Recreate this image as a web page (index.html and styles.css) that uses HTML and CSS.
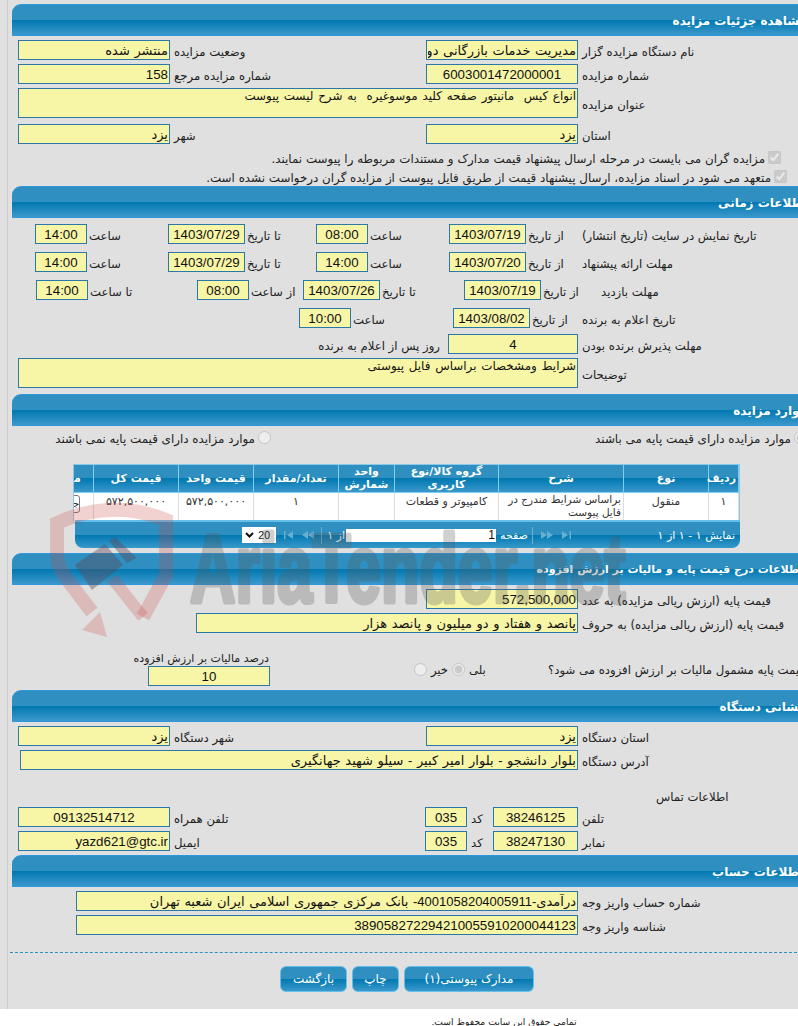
FILE: index.html
```html
<!DOCTYPE html>
<html lang="fa">
<head>
<meta charset="utf-8">
<title>مشاهده جزئیات مزایده</title>
<link rel="stylesheet" href="styles.css">
</head>
<body>
<div class="page">
<div class="inner">

<h2 class="head near">مشاهده جزئیات مزایده</h2>
<div class="body s1">
  <div class="row two">
    <input class="fld fa" readonly value="منتشر شده"><label class="lb">وضعیت مزایده</label>
    <input class="fld fa" readonly value="مدیریت خدمات بازرگانی دولتی یزد"><label class="lb">نام دستگاه مزایده گزار</label>
  </div>
  <div class="row two">
    <input class="fld num end" readonly value="158"><label class="lb">شماره مزایده مرجع</label>
    <input class="fld num mid" readonly value="6003001472000001"><label class="lb">شماره مزایده</label>
  </div>
  <div class="row wide tall">
    <textarea class="fld fa area" readonly>انواع کیس  مانیتور صفحه کلید موسوغیره  به شرح لیست پیوست</textarea><label class="lb">عنوان مزایده</label>
  </div>
  <div class="row two gap6">
    <input class="fld fa" readonly value="یزد"><label class="lb">شهر</label>
    <input class="fld fa" readonly value="یزد"><label class="lb">استان</label>
  </div>
  <div class="check first"><input type="checkbox" disabled checked><span>مزایده گران می بایست در مرحله ارسال پیشنهاد قیمت مدارک و مستندات مربوطه را پیوست نمایند.</span></div>
  <div class="check second"><input type="checkbox" disabled checked><span>متعهد می شود در اسناد مزایده، ارسال پیشنهاد قیمت از طریق فایل پیوست از مزایده گران درخواست نشده است.</span></div>
</div>

<h2 class="head near">اطلاعات زمانی</h2>
<div class="body s2">
  <div class="row t1">
    <input class="fld num mid" readonly value="14:00"><label class="lb">ساعت</label>
    <input class="fld num mid" readonly value="1403/07/29"><label class="lb">تا تاریخ</label>
    <input class="fld num mid" readonly value="08:00"><label class="lb">ساعت</label>
    <input class="fld num mid" readonly value="1403/07/19"><label class="lb">از تاریخ</label>
    <label class="lb last">تاریخ نمایش در سایت (تاریخ انتشار)</label>
  </div>
  <div class="row t1">
    <input class="fld num mid" readonly value="14:00"><label class="lb">ساعت</label>
    <input class="fld num mid" readonly value="1403/07/29"><label class="lb">تا تاریخ</label>
    <input class="fld num mid" readonly value="14:00"><label class="lb">ساعت</label>
    <input class="fld num mid" readonly value="1403/07/20"><label class="lb">از تاریخ</label>
    <label class="lb last">مهلت ارائه پیشنهاد</label>
  </div>
  <div class="row t3">
    <input class="fld num mid" readonly value="14:00"><label class="lb">تا ساعت</label>
    <input class="fld num mid" readonly value="08:00"><label class="lb">از ساعت</label>
    <input class="fld num mid" readonly value="1403/07/26"><label class="lb">تا تاریخ</label>
    <input class="fld num mid" readonly value="1403/07/19"><label class="lb">از تاریخ</label>
    <label class="lb last">مهلت بازدید</label>
  </div>
  <div class="row t4">
    <input class="fld num mid" readonly value="10:00"><label class="lb">ساعت</label>
    <input class="fld num mid" readonly value="1403/08/02"><label class="lb">از تاریخ</label>
    <label class="lb last">تاریخ اعلام به برنده</label>
  </div>
  <div class="row t5">
    <label class="lb after">روز پس از اعلام به برنده</label>
    <input class="fld num mid" readonly value="4"><label class="lb">مهلت پذیرش برنده بودن</label>
  </div>
  <div class="row wide tall gap4">
    <textarea class="fld fa area" readonly>شرایط ومشخصات براساس فایل پیوستی</textarea><label class="lb">توضیحات</label>
  </div>
</div>

<h2 class="head near">موارد مزایده</h2>
<div class="body s3">
  <div class="radios">
    <span class="opt"><span>موارد مزایده دارای قیمت پایه نمی باشند</span><input type="radio" disabled></span>
    <span class="opt"><span>موارد مزایده دارای قیمت پایه می باشند</span><input type="radio" disabled checked></span>
  </div>
  <div class="grid-wrap">
    <table class="grid">
      <colgroup><col class="c1"><col class="c2"><col class="c3"><col class="c4"><col class="c5"><col class="c6"><col class="c7"><col class="c8"><col class="c9"></colgroup>
      <thead><tr>
        <th>ردیف</th><th>نوع</th><th>شرح</th><th>گروه کالا/نوع کاربری</th><th>واحد شمارش</th><th>تعداد/مقدار</th><th>قیمت واحد</th><th>قیمت کل</th><th>مدارک</th>
      </tr></thead>
      <tbody><tr>
        <td>۱</td><td>منقول</td><td class="desc">براساس شرایط مندرج در فایل پیوست</td><td>کامپیوتر و قطعات</td><td></td><td>۱</td><td>۵۷۲,۵۰۰,۰۰۰</td><td>۵۷۲,۵۰۰,۰۰۰</td><td class="act"><button class="mini" type="button">جزئیات</button></td>
      </tr></tbody>
    </table>
  </div>
  <div class="pager">
    <div class="psize"><svg width="9" height="6" viewBox="0 0 9 6"><path class="chev" d="M1 1l3.500 3.500L8 1"/></svg><span>20</span></div>
    <svg class="pi" width="10" height="8" viewBox="0 0 10 8"><path d="M0 0h1.500v8H0zM9 0v8L3 4z"/></svg>
    <svg class="pi" width="12" height="8" viewBox="0 0 12 8"><path d="M6 0v8L0 4zM12 0v8L6 4z"/></svg>
    <span class="sep"></span>
    <span class="pt of">از ۱</span>
    <input class="pinput" readonly value="1">
    <span class="pt">صفحه</span>
    <span class="sep sep2"></span>
    <svg class="pi" width="12" height="8" viewBox="0 0 12 8"><path d="M0 0v8l6-4zM6 0v8l6-4z"/></svg>
    <svg class="pi" width="10" height="8" viewBox="0 0 10 8"><path d="M1 0v8l6-4zM8.500 0H10v8H8.500z"/></svg>
    <span class="pt count">نمایش ۱ - ۱ از ۱</span>
  </div>
</div>

<h2 class="head long">اطلاعات درج قیمت پایه و مالیات بر ارزش افزوده</h2>
<div class="body s4">
  <div class="row base">
    <input class="fld num end" readonly value="572,500,000"><label class="lb">قیمت پایه (ارزش ریالی مزایده) به عدد</label>
  </div>
  <div class="row letters">
    <input class="fld fa" readonly value="پانصد و هفتاد و دو میلیون و پانصد هزار"><label class="lb">قیمت پایه (ارزش ریالی مزایده) به حروف</label>
  </div>
  <div class="tax">
    <div class="tax-box">
      <label class="lb tax-l">درصد مالیات بر ارزش افزوده</label>
      <input class="fld num mid" readonly value="10">
    </div>
    <div class="yesno">
      <input type="radio" disabled><span class="no">خیر</span>
      <input type="radio" disabled checked><span class="yes">بلی</span>
    </div>
    <label class="lb q">قیمت پایه مشمول مالیات بر ارزش افزوده می شود؟</label>
  </div>
</div>

<h2 class="head">نشانی دستگاه</h2>
<div class="body s5">
  <div class="row two">
    <input class="fld fa" readonly value="یزد"><label class="lb">شهر دستگاه</label>
    <input class="fld fa" readonly value="یزد"><label class="lb">استان دستگاه</label>
  </div>
  <div class="row addr">
    <input class="fld fa" readonly value="بلوار دانشجو - بلوار امیر کبیر - سیلو شهید جهانگیری"><label class="lb">آدرس دستگاه</label>
  </div>
  <div class="contact">اطلاعات تماس</div>
  <div class="row tel">
    <input class="fld num mid" readonly value="09132514712"><label class="lb">تلفن همراه</label>
    <input class="fld num mid" readonly value="035"><label class="lb">کد</label>
    <input class="fld num mid" readonly value="38246125"><label class="lb">تلفن</label>
  </div>
  <div class="row tel">
    <input class="fld num end" readonly value="yazd621@gtc.ir"><label class="lb">ایمیل</label>
    <input class="fld num mid" readonly value="035"><label class="lb">کد</label>
    <input class="fld num mid" readonly value="38247130"><label class="lb">نمابر</label>
  </div>
</div>

<h2 class="head">اطلاعات حساب</h2>
<div class="body s6">
  <div class="row acct">
    <input class="fld fa" readonly value="درآمدی-4001058204005911- بانک مرکزی جمهوری اسلامی ایران شعبه تهران"><label class="lb">شماره حساب واریز وجه</label>
  </div>
  <div class="row acct">
    <input class="fld num end" readonly value="389058272294210055910200044123"><label class="lb">شناسه واریز وجه</label>
  </div>
</div>

<div class="actions">
  <button class="btn" type="button">بازگشت</button>
  <button class="btn" type="button">چاپ</button>
  <button class="btn" type="button">مدارک پیوستی(۱)</button>
</div>

</div>
<svg class="mark" width="798" height="1026" viewBox="0 0 798 1026" aria-hidden="true">
  <path class="m-red" d="M143 617L166 575V520Q112 498 57 523V555Q58 568 66 578L92 612"/>
  <path class="m-red-thin" d="M143 617L112 578"/>
  <path class="m-red-fill" d="M107 637L100 612L82 630Z"/>
  <path class="m-gray-d" d="M75 565L105 544L123 565L92 590ZM109 541L115 537L137 558L127 563Z"/>
  <text class="m-text" transform="translate(190 602) scale(.655 1)">AriaTender.net</text>
</svg>
<footer class="foot">تمامی حقوق این سایت محفوظ است.</footer>
</div>
</body>
</html>
```
FILE: styles.css
```css
* { box-sizing: border-box; }
html, body { margin: 0; height: 1026px; overflow: hidden; background: #fff; }
body { font-family: "DejaVu Sans", sans-serif; font-size: 11.700px; color: #222; }
.page { position: relative; width: 798px; height: 1026px; overflow: hidden; }
.inner { width: 830px; height: 1009px; background: #e0e0e0; padding: 4px 0 0 0; border-left: 1px solid #ccc; margin-left: 7px; box-shadow: -7px 0 0 #e0e0e0; }
.head { margin: 0 0 0 4px; height: 32px; padding: 8px 15px 0 0; width: 806px; direction: rtl; font-size: 12px; line-height: 16px; font-weight: bold; color: #fff; white-space: nowrap;
  border-top: 1px solid #2f97dc; border-bottom: 1px solid #2f97dc; border-top-left-radius: 9px;
  background: linear-gradient(#2e8fc0 0, #2e8fc0 50%, #0078b0 50%, #3a98cc 100%); }
.head.near { padding-right: 11px; }
.head.long { font-size: 11px; }
.body { display: flex; flex-direction: column; }
.row { display: grid; height: 20px; align-items: center; flex: none; }
.lb { direction: rtl; text-align: left; white-space: nowrap; padding: 3px 0 0 4px; line-height: 14px; unicode-bidi: plaintext; }
.lb.last { padding-left: 0; }
.fld { display: block; width: 100%; height: 20px; margin: 0; padding: 0 1px; background: #f7f5a6; border: 1px solid #2a78a8; border-radius: 0; color: #111; outline: none; }
.fa { font-family: "Liberation Sans", "DejaVu Sans", sans-serif; font-size: 13px; word-spacing: 1px; direction: rtl; text-align: right; }
.num { font-family: "Liberation Sans", sans-serif; font-size: 13.300px; direction: ltr; text-align: right; }
.mid { text-align: center; }
.end { text-align: right; }
.area { height: 30px; resize: none; overflow: hidden; font-size: 11.900px; word-spacing: 1.500px; line-height: 15px; padding-top: 0; }
.tall { height: 30px; }

.two { grid-template-columns: 152px 256px 152px 1fr; padding-left: 10px; margin-bottom: 4px; }
.wide { grid-template-columns: 560px 1fr; padding-left: 10px; }
.gap6 { margin-top: 6px; margin-bottom: 4px; }
.s1 { padding-top: 4px; }
.s1 .wide { margin-bottom: 0; }
.s1 .gap6 { margin-bottom: 0; }
.check { height: 19px; display: flex; direction: rtl; align-items: center; white-space: nowrap; width: 822px; }
.check input { width: 13px; height: 13px; margin: 0 0 0 3px; flex: none; }
.check.first { margin-top: 4px; padding-right: 49px; }
.check.second { padding-right: 43px; }
.check span { font-size: 11.900px; padding-top: 2px; }

.s2 { padding-top: 6px; }
.t1, .t3, .t4, .t5 { margin-bottom: 8px; }
.t1 { grid-template-columns: 52px 81px 77px 71px 52px 81px 77px 56px 1fr; padding-left: 27px; }
.t3 { grid-template-columns: 52px 109px 52px 54px 77px 84px 77px 60px 1fr; padding-left: 28px; }
.t4 { grid-template-columns: 52px 102px 77px 52px 1fr; padding-left: 291px; margin-bottom: 6px; }
.t5 { grid-template-columns: 127px 130px 1fr; padding-left: 313px; margin-bottom: 4px; }
.t1 .lb, .t3 .lb, .t4 .lb { padding-left: 2px; }
.t1 .lb.last, .t3 .lb.last, .t4 .lb.last { padding-left: 0; }
.after { text-align: right; padding-left: 0; padding-right: 8px; }
.t5 .lb:last-child { padding-left: 4px; }
.gap4 { margin-bottom: 6px; }

.s3 { height: 127px; }
.radios { height: 24px; padding: 4px 0 0 48px; display: flex; gap: 321px; flex: none; }
.opt { display: inline-flex; align-items: center; justify-content: flex-end; direction: ltr; white-space: nowrap; height: 15px; font-size: 11.900px; width: 215px; }
.opt input { width: 13px; height: 13px; margin: 0 0 0 3px; flex: none; }
.opt span { direction: rtl; padding-top: 2px; }
.grid-wrap { width: 667px; margin: 14px 0 0 65px; height: 57px; overflow: hidden; direction: rtl; border: 1px solid #8cc8e8; border-bottom: 0; flex: none; }
.grid { border-collapse: collapse; table-layout: fixed; width: 705px; direction: rtl; }
.c1 { width: 30px; } .c2 { width: 85px; } .c3 { width: 125px; } .c4 { width: 104px; } .c5 { width: 56px; }
.c6 { width: 85px; } .c7 { width: 75px; } .c8 { width: 85px; } .c9 { width: 60px; }
.grid th { height: 27px; padding: 0 2px; font-size: 11px; line-height: 13px; color: #fff; font-weight: bold; border: 1px solid #7fcdf0; border-top: 0;
  background: linear-gradient(#2e8fc0 0, #2e8fc0 50%, #0078b0 50%, #3a98cc 100%); }
.grid td { height: 29px; padding: 2px 3px; background: #fff; vertical-align: top; text-align: center; font-size: 11px; line-height: 14px; border: 1px solid #ddd; border-top: 0; color: #333; }
.grid td.desc { text-align: right; padding: 0 2px; font-size: 10.500px; line-height: 13px; }
.act { padding-right: 13px !important; text-align: right !important; }
.mini { display: block; width: 30px; height: 18px; padding: 0; font-size: 10px; border: 1px solid #777; border-radius: 3px; background: #fff; direction: rtl; color: #222; }
.pager { display: flex; align-items: center; width: 665px; height: 26px; margin: 1px 0 0 67px; padding-left: 167px; flex: none; border-radius: 0 0 8px 8px; box-shadow: 0 -2px 0 #66bfea;
  background: linear-gradient(#2e8fc0 0, #2e8fc0 50%, #0078b0 50%, #3a98cc 100%); color: #fff; font-size: 11px; }
.psize { display: flex; align-items: center; justify-content: space-between; width: 34px; height: 16px; padding: 0 6px 0 3px; background: #fff; font-size: 10.500px; font-family: "Liberation Sans", sans-serif; color: #111; flex: none; }
.chev { fill: none; stroke: #111; stroke-width: 2; }
.pi { fill: #66aed2; flex: none; margin-left: 8px; }
.sep { width: 1px; height: 17px; background: #68aed2; margin: 0 4px 0 7px; flex: none; }
.sep2 { margin: 0 0 0 4px; }
.pinput { width: 150px; height: 13px; margin: 0 4px 0 1px; padding: 0 1px; border: 0; background: #fff; font-family: "Liberation Sans", sans-serif; font-size: 12px; text-align: right; color: #111; flex: none; }
.pt { direction: rtl; white-space: nowrap; }
.of { width: 19px; flex: none; }
.count { margin-left: auto; margin-right: 5px; }

.s4 { padding-top: 4px; }
.base { grid-template-columns: 152px 1fr; padding-left: 418px; margin-bottom: 4px; }
.letters { grid-template-columns: 382px 1fr; padding-left: 188px; }
.tax { display: flex; height: 31px; margin-top: 22px; margin-bottom: 4px; flex: none; align-items: flex-start; }
.tax-box { width: 122px; margin-left: 140px; display: flex; flex-direction: column; position: relative; height: 31px; padding-top: 11px; flex: none; }
.tax-l { position: absolute; left: -13px; top: -3px; width: 134px; padding: 0; text-align: right; font-size: 11px; }
.yesno { display: flex; align-items: center; gap: 3px; height: 15px; margin: 7px 0 0 144px; direction: ltr; width: 134px; flex: none; }
.yesno input { width: 13px; height: 13px; margin: 0; flex: none; }
.no { width: 19px; text-align: center; }
.yes { margin-left: 1px; }
.q { padding-left: 0; margin-top: 5px; direction: rtl; white-space: nowrap; }

.s5 { padding-top: 4px; }
.addr { grid-template-columns: 558px 1fr; padding-left: 12px; }
.contact { height: 37px; padding: 20px 0 0 648px; flex: none; white-space: nowrap; line-height: 14px; text-align: left; unicode-bidi: plaintext; }
.tel { grid-template-columns: 152px 255px 42px 26px 85px 1fr; padding-left: 10px; margin-bottom: 4px; }

.s6 { padding-top: 4px; }
.acct { grid-template-columns: 502px 1fr; padding-left: 68px; margin-bottom: 4px; }

.actions { display: flex; gap: 5px; margin: 13px 0 0 2px; padding: 13px 0 0 270px; border-top: 1px dashed #2e8fc0; direction: ltr; height: 58px; }
.btn { height: 26px; padding: 0; margin: 0; font-family: "DejaVu Sans", sans-serif; font-size: 12px; color: #fff; direction: rtl; border: 1px solid #66bfea; border-radius: 6px; width: 67px;
  background: linear-gradient(#2e8fc0 0, #2e8fc0 50%, #0078b0 50%, #3a98cc 100%); }
.btn:nth-child(2) { width: 47px; }
.btn:nth-child(3) { width: 130px; }

.mark { position: absolute; left: 0; top: 0; pointer-events: none; }
.m-red { fill: none; stroke: rgba(205, 70, 70, .25); stroke-width: 14; }
.m-red-thin { fill: none; stroke: rgba(205, 70, 70, .25); stroke-width: 12; }
.m-red-fill { fill: rgba(205, 70, 70, .25); }
.m-gray-d { fill: rgba(90, 70, 85, .4); }
.m-text { font-family: "Liberation Sans", sans-serif; font-weight: bold; font-size: 96px; fill: #5a5a5a; stroke: #5a5a5a; stroke-width: 5px; stroke-linejoin: round; opacity: .28; }
.foot { height: 17px; padding-top: 7px; text-align: center; direction: rtl; font-size: 9.200px; line-height: 12px; color: #222; margin-left: 209px; width: 590px; }
```
